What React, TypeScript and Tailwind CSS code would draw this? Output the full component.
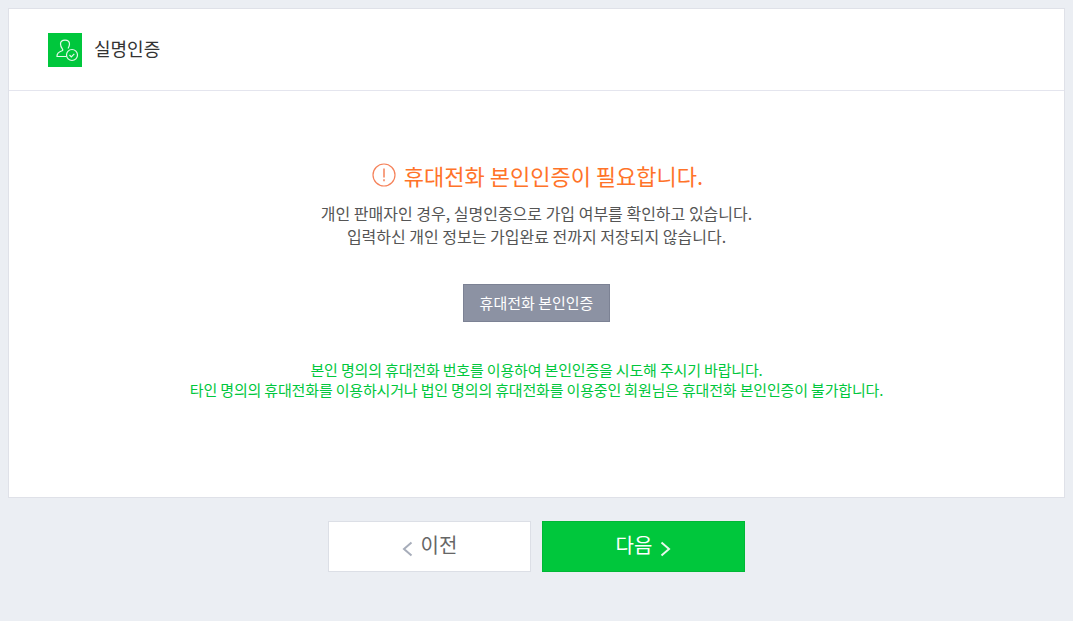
const KR = "font-['Noto_Sans_CJK_KR','Liberation_Sans',sans-serif]";

function UserCheckIcon() {
  return (
    <svg width="34" height="34" viewBox="0 0 34 34" fill="none" stroke="#e6f9ec" strokeWidth="1.2">
      <path d="M18.500 23.500H9c-.2-3 1.800-4.600 5-5.700.9-.4 1-1 .5-1.700-1.300-1.500-2-3.200-2-5 0-2.500 1.900-4 4.500-4s4.500 1.500 4.500 4c0 1.700-.5 3-1.500 4.400" />
      <circle cx="24" cy="22" r="5.500" />
      <path d="M21.500 22l1.800 1.800 3-3" />
    </svg>
  );
}

function AlertIcon() {
  return (
    <svg width="24" height="24" viewBox="0 0 24 24" fill="none" stroke="#f5825a" strokeWidth="1.200">
      <circle cx="12" cy="12" r="11" />
      <path d="M12 5.500v9" strokeWidth="1.500" />
      <path d="M12 16.300v2" strokeWidth="1.500" />
    </svg>
  );
}

function Chevron({ dir, color }: { dir: "left" | "right"; color: string }) {
  return (
    <svg width="11" height="16" viewBox="0 0 11 16" fill="none" stroke={color} strokeWidth="2">
      <path d={dir === "left" ? "M9.500 1.500L2 8l7.500 6.500" : "M1.500 1.500L9 8l-7.500 6.500"} />
    </svg>
  );
}

export default function App() {
  return (
    <div className={`min-h-[621px] bg-[#ebeef3] px-2 pt-2 ${KR}`}>
      <div className="h-[490px] border border-[#dfe1e8] bg-white">
        <div className="flex h-[82px] items-center border-b border-[#e4e5ee] pl-[39px]">
          <span className="flex h-[34px] w-[34px] items-center justify-center bg-[#00c73c]">
            <UserCheckIcon />
          </span>
          <h1 className="ml-3 -mt-[3px] text-[18px] font-normal text-[#333]">실명인증</h1>
        </div>

        <div className="flex flex-col items-center pt-[69px] text-center">
          <div className="flex items-center pl-[2px] text-[22px] leading-[30px] text-[#ff7329]">
            <AlertIcon />
            <span className="ml-[8px]">휴대전화 본인인증이 필요합니다.</span>
          </div>
          <p className="mt-[12px] text-[16px] leading-[23px] text-[#555]">
            개인 판매자인 경우, 실명인증으로 가입 여부를 확인하고 있습니다.
            <br />
            입력하신 개인 정보는 가입완료 전까지 저장되지 않습니다.
          </p>
          <button
            type="button"
            className="mt-[36px] h-[38px] w-[147px] border border-[#7c8294] bg-[#8c92a3] text-[15px] text-white"
          >
            휴대전화 본인인증
          </button>
          <p className="mt-[38px] text-[15px] leading-[20px] tracking-[-0.17px] text-[#00c73c]">
            본인 명의의 휴대전화 번호를 이용하여 본인인증을 시도해 주시기 바랍니다.
            <br />
            타인 명의의 휴대전화를 이용하시거나 법인 명의의 휴대전화를 이용중인 회원님은 휴대전화 본인인증이 불가합니다.
          </p>
        </div>
      </div>

      <div className="mt-[23px] flex justify-center gap-[11px]">
        <button
          type="button"
          className="flex h-[51px] w-[203px] items-center justify-center border border-[#dcdfe6] bg-white text-[20px] text-[#666]"
        >
          <span className="mt-[5px]">
            <Chevron dir="left" color="#a7adba" />
          </span>
          <span className="ml-2 -mt-[4px]">이전</span>
        </button>
        <button
          type="button"
          className="flex h-[51px] w-[203px] items-center justify-center border border-[#00b836] bg-[#00c73c] text-[20px] text-white"
        >
          <span className="-mt-[4px]">다음</span>
          <span className="ml-2 mt-[5px]">
            <Chevron dir="right" color="#e6f9ec" />
          </span>
        </button>
      </div>
    </div>
  );
}
